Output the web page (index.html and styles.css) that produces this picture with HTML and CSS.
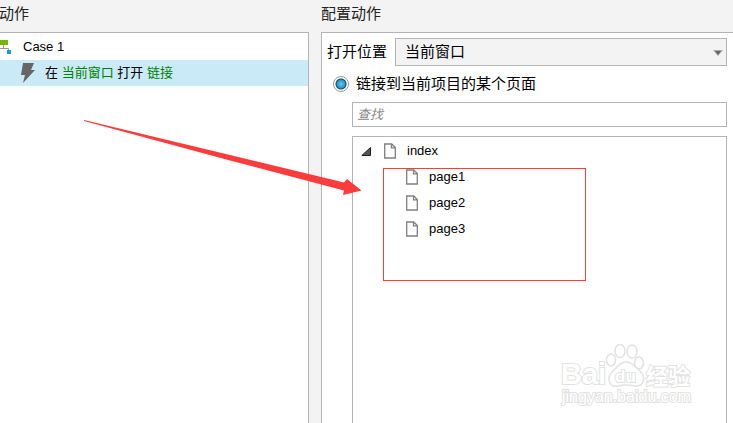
FILE: index.html
```html
<!DOCTYPE html>
<html lang="zh-CN">
<head>
<meta charset="utf-8">
<title>配置动作</title>
<link rel="stylesheet" href="styles.css">
</head>
<body>
<main class="editor">
  <section class="pane">
    <h2 class="title title-cut">动作</h2>
    <div class="panel panel-left">
      <div class="case">
        <svg class="case-icon" width="11" height="16" viewBox="0 0 11 16"><path d="M3.500 6v3.500h5V12M0 9.500h4" fill="none" stroke="#999"/><path d="M0 1h8v5H0z" fill="#76b900"/><path d="M7 11h4v4H7z" fill="#1e9bd7"/></svg>
        <span>Case 1</span>
      </div>
      <div class="action">
        <svg width="16" height="22" viewBox="0 0 16 22"><path d="M3 1h11l-3 7h4L3 21l2-8H1z" fill="#666"/></svg>
        <span>在 <em>当前窗口</em> 打开 <em>链接</em></span>
      </div>
    </div>
  </section>
  <section class="pane">
    <h2 class="title">配置动作</h2>
    <div class="panel panel-right">
      <div class="open-row">
        <label for="place">打开位置</label>
        <div class="select-box">
          <select id="place"><option>当前窗口</option></select>
          <svg class="caret" width="10" height="6" viewBox="0 0 10 6"><path d="M0 0h10L5 6z" fill="#aaa"/><path d="M2 1h6L5 5z" fill="#666"/></svg>
        </div>
      </div>
      <label class="radio-row"><input type="radio" name="target" checked><span>链接到当前项目的某个页面</span></label>
      <input class="search" type="text" placeholder="查找" aria-label="查找">
      <ul class="tree">
        <li class="node">
          <svg class="expander" width="10" height="9" viewBox="0 0 10 9"><path d="M9.500 .5v8H.8z" fill="#555" stroke="#222"/></svg>
          <svg class="file" width="12" height="16" viewBox="0 0 12 16"><path d="M.7 1h7L11.300 4.500V15H.7zM7.500 1v3.800H11" fill="#fff" stroke="#808080" stroke-width="1.300"/></svg>
          <span>index</span>
        </li>
        <li class="node child"><svg class="file" width="12" height="16" viewBox="0 0 12 16"><path d="M.7 1h7L11.300 4.500V15H.7zM7.500 1v3.800H11" fill="#fff" stroke="#808080" stroke-width="1.300"/></svg><span>page1</span></li>
        <li class="node child"><svg class="file" width="12" height="16" viewBox="0 0 12 16"><path d="M.7 1h7L11.300 4.500V15H.7zM7.500 1v3.800H11" fill="#fff" stroke="#808080" stroke-width="1.300"/></svg><span>page2</span></li>
        <li class="node child"><svg class="file" width="12" height="16" viewBox="0 0 12 16"><path d="M.7 1h7L11.300 4.500V15H.7zM7.500 1v3.800H11" fill="#fff" stroke="#808080" stroke-width="1.300"/></svg><span>page3</span></li>
      </ul>
    </div>
  </section>
  <div class="mark-box"></div>
  <svg class="mark-arrow" width="278" height="78" viewBox="0 0 278 78"><path d="M0 0L146 35 260 62.500 263 59 277.500 70.500 259 75 260 70.500 146 40.500 0 .9z" fill="#fa3c3c"/></svg>
  <svg class="watermark" width="136" height="66" viewBox="0 0 136 66">
    <g class="watermark-paw">
      <ellipse cx="53" cy="17" rx="4.500" ry="6"/><ellipse cx="62" cy="8" rx="5" ry="6.500"/><ellipse cx="74" cy="8.500" rx="5" ry="6.500"/><ellipse cx="81" cy="20" rx="4.500" ry="6"/>
      <path d="M68 19c-7 0-8 5-13 9-8 7-3 17 5 15q8-2 17 0c8 1 12-8 5-15-5-4-7-9-14-9z"/>
    </g>
    <g class="watermark-text">
      <text class="wm-logo" x="3" y="41">Bai</text>
      <text class="wm-du" x="57" y="39">du</text>
      <text class="wm-cn" x="88" y="41">经验</text>
      <text class="wm-url" x="4" y="59">jingyan.baidu.com</text>
    </g>
  </svg>
</main>
</body>
</html>
```
FILE: styles.css
```css
* {
  box-sizing: border-box;
}

body {
  margin: 0;
  background: #f3f3f3;
  color: #000;
  font: 13px/26px "Liberation Sans", "Noto Sans CJK SC", sans-serif;
}

.editor {
  position: relative;
  display: grid;
  grid-template-columns: 3fr 4fr;
  gap: 12px;
  min-height: 100vh;
  overflow: hidden;
}

.pane {
  display: flex;
  flex-direction: column;
  min-width: 0;
}

.title {
  margin: 0;
  height: 32px;
  font-size: 15px;
  font-weight: 400;
  line-height: 28px;
  color: #222;
}

.title-cut {
  margin-left: -1px;
}

.panel {
  flex: 1;
  display: flex;
  flex-direction: column;
  background: #fff;
  border-top: 1px solid #b4b4b4;
}

.panel-left {
  border-right: 1px solid #b4b4b4;
}

.panel-right {
  border-left: 1px solid #b4b4b4;
  padding: 5px 6px 0 5px;
}

.case,
.action {
  display: flex;
  align-items: center;
}

.case {
  height: 27px;
  gap: 12px;
}

.action {
  height: 26px;
  padding-left: 20px;
  gap: 9px;
  background: #cbeaf7;
}

.action em {
  font-style: normal;
  color: #008000;
}

.open-row {
  display: flex;
  align-items: center;
  gap: 8px;
  font-size: 15px;
}

.select-box {
  position: relative;
  flex: 1;
}

.select-box select {
  display: block;
  width: 100%;
  height: 28px;
  padding: 0 24px 0 9px;
  appearance: none;
  background: #f3f3f3;
  border: 1px solid #b4b4b4;
  border-radius: 0;
  color: #000;
  font: inherit;
}

.caret {
  position: absolute;
  right: 4px;
  top: 12px;
}

.radio-row {
  display: flex;
  align-items: center;
  height: 36px;
  padding-left: 6px;
  gap: 7px;
  font-size: 15px;
}

.radio-row input {
  appearance: none;
  width: 16px;
  height: 16px;
  margin: 0;
  border: 1px solid #999;
  border-radius: 50%;
  background: radial-gradient(circle at 50% 50%, #6cc8ee 0, #2795c8 4px, #174a68 5px, #fff 6px);
}

.search {
  height: 25px;
  margin: 0 0 9px 25px;
  padding: 0 4px;
  border: 1px solid #b4b4b4;
  border-radius: 0;
  background: #fff;
  font: italic 13px "Liberation Sans", "Noto Sans CJK SC", sans-serif;
}

.search::placeholder {
  color: #888;
}

.tree {
  flex: 1;
  margin: 0 0 0 25px;
  padding: 1px 0 0 8px;
  border: 1px solid #b4b4b4;
  border-bottom: 0;
  list-style: none;
}

.node {
  display: flex;
  align-items: center;
}

.node span {
  margin-left: 11px;
}

.expander {
  margin-right: 13px;
}

.child {
  padding-left: 45px;
}

.mark-box {
  position: absolute;
  left: 383px;
  top: 168px;
  width: 203px;
  height: 113px;
  border: 1px solid #fa3c3c;
}

.mark-arrow {
  position: absolute;
  left: 84px;
  top: 120px;
}

.watermark {
  position: absolute;
  left: 558px;
  top: 343px;
}

.watermark-paw {
  fill: #fff;
  stroke: #e2e2e2;
  stroke-width: 1.5px;
}

.watermark-text {
  fill: #fff;
  stroke: #e2e2e2;
  stroke-width: 2px;
  paint-order: stroke;
}

.wm-logo {
  font: bold 29px "Liberation Sans", sans-serif;
}

.wm-du {
  font: bold 17px "Liberation Sans", sans-serif;
}

.wm-cn {
  font: bold 22px "Noto Sans CJK SC", sans-serif;
}

.wm-url {
  font: 16px "Liberation Sans", sans-serif;
}
```
